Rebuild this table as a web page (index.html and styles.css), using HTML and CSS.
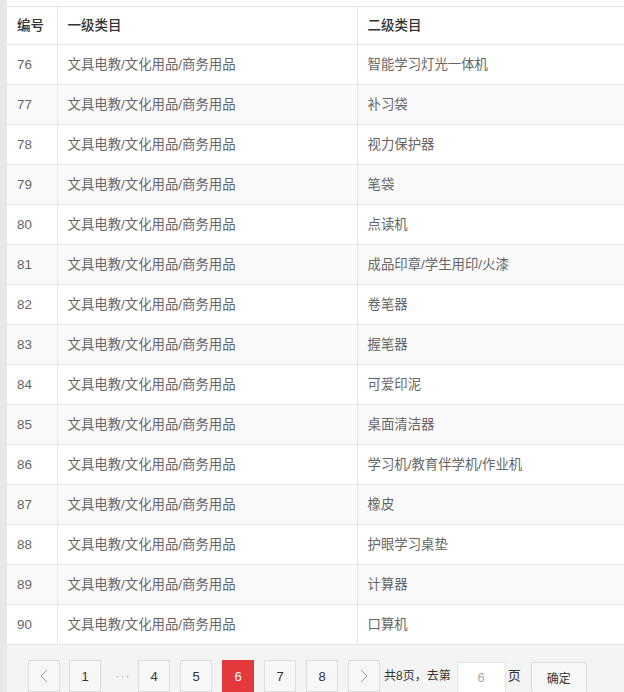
FILE: index.html
```html
<!DOCTYPE html>
<html lang="zh">
<head>
<meta charset="utf-8">
<link rel="stylesheet" href="styles.css">
</head>
<body>
<div class="page">
  <div class="strip"></div>
  <div class="main">
    <table class="grid">
      <colgroup><col class="c1"><col class="c2"><col class="c3"></colgroup>
      <thead>
        <tr><th>编号</th><th>一级类目</th><th>二级类目</th></tr>
      </thead>
      <tbody>
        <tr><td>76</td><td>文具电教/文化用品/商务用品</td><td>智能学习灯光一体机</td></tr>
        <tr><td>77</td><td>文具电教/文化用品/商务用品</td><td>补习袋</td></tr>
        <tr><td>78</td><td>文具电教/文化用品/商务用品</td><td>视力保护器</td></tr>
        <tr><td>79</td><td>文具电教/文化用品/商务用品</td><td>笔袋</td></tr>
        <tr><td>80</td><td>文具电教/文化用品/商务用品</td><td>点读机</td></tr>
        <tr><td>81</td><td>文具电教/文化用品/商务用品</td><td>成品印章/学生用印/火漆</td></tr>
        <tr><td>82</td><td>文具电教/文化用品/商务用品</td><td>卷笔器</td></tr>
        <tr><td>83</td><td>文具电教/文化用品/商务用品</td><td>握笔器</td></tr>
        <tr><td>84</td><td>文具电教/文化用品/商务用品</td><td>可爱印泥</td></tr>
        <tr><td>85</td><td>文具电教/文化用品/商务用品</td><td>桌面清洁器</td></tr>
        <tr><td>86</td><td>文具电教/文化用品/商务用品</td><td>学习机/教育伴学机/作业机</td></tr>
        <tr><td>87</td><td>文具电教/文化用品/商务用品</td><td>橡皮</td></tr>
        <tr><td>88</td><td>文具电教/文化用品/商务用品</td><td>护眼学习桌垫</td></tr>
        <tr><td>89</td><td>文具电教/文化用品/商务用品</td><td>计算器</td></tr>
        <tr><td>90</td><td>文具电教/文化用品/商务用品</td><td>口算机</td></tr>
      </tbody>
    </table>
    <div class="pager">
      <a class="pbtn arrow"><svg width="8" height="14" viewBox="0 0 8 14"><polyline points="7,1 1,7 7,13" fill="none" stroke="#999" stroke-width="1"/></svg></a>
      <a class="pbtn">1</a>
      <span class="dots">···</span>
      <a class="pbtn">4</a>
      <a class="pbtn">5</a>
      <a class="pbtn active">6</a>
      <a class="pbtn">7</a>
      <a class="pbtn">8</a>
      <a class="pbtn arrow"><svg width="8" height="14" viewBox="0 0 8 14"><polyline points="1,1 7,7 1,13" fill="none" stroke="#999" stroke-width="1"/></svg></a>
      <span class="skip">共8页，去第</span>
      <input class="goto" type="text" value="6">
      <span class="unit">页</span>
      <button class="ok">确定</button>
    </div>
  </div>
</div>
</body>
</html>
```

FILE: styles.css
```css
html, body {
  margin: 0;
  padding: 0;
  overflow: hidden;
  background: #fff;
}
body {
  font-family: "Liberation Sans", "Noto Sans CJK SC", sans-serif;
  font-size: 14px;
  color: #666;
}
.page {
  display: flex;
  width: 624px;
  height: 692px;
  overflow: hidden;
}
.strip {
  width: 7px;
  flex: none;
  background: #e8e8e8;
}
.main {
  flex: 1;
  min-width: 0;
  padding-top: 6px;
  display: flex;
  flex-direction: column;
}
.grid {
  border-collapse: collapse;
  table-layout: fixed;
  width: 820px;
}
.c1 { width: 50px; }
.c2 { width: 300px; }
.c3 { width: 470px; }
.grid th, .grid td {
  text-align: left;
  padding: 0 10px;
  border: 1px solid #e6e6e6;
  line-height: 20px;
  white-space: nowrap;
}
.grid tr > :first-child { border-left: none; }
.grid th {
  height: 37px;
  font-weight: 500;
  color: #333;
  font-size: 13.5px;
}
.grid td {
  height: 39px;
  font-size: 13.4px;
}
.grid tbody tr:nth-child(even) td { background: #fafafa; }
.pager {
  flex: 1;
  background: #f4f4f4;
  display: flex;
  align-items: flex-start;
  padding: 15px 0 0 21px;
  font-size: 13px;
  color: #333;
}
.pbtn {
  box-sizing: border-box;
  width: 32px;
  height: 32px;
  margin-right: 10px;
  border: 1px solid #dcdcdc;
  background: #f7f7f7;
  display: flex;
  align-items: center;
  justify-content: center;
  color: #333;
  font-size: 13px;
}
.pbtn.active {
  background: #e3393c;
  border-color: #e3393c;
  color: #fff;
}
.pbtn.arrow { margin-right: 9px; }
.dots {
  width: 28px;
  margin-left: -2px;
  margin-right: 1px;
  color: #aaa;
  font-size: 12px;
  letter-spacing: 1px;
  line-height: 32px;
  text-align: center;
}
.skip {
  line-height: 32px;
  font-size: 12px;
  margin-left: -5px;
}
.goto {
  box-sizing: border-box;
  width: 49px;
  height: 31px;
  margin: 2px 2px 0 6px;
  border: 1px solid #e6e6e6;
  background: #fff;
  color: #aaa;
  text-align: center;
  font-size: 13px;
  font-family: "Liberation Sans", sans-serif;
  padding: 0;
  outline: none;
}
.unit {
  line-height: 32px;
  font-size: 13px;
  margin-right: 10px;
}
.ok {
  box-sizing: border-box;
  width: 56px;
  height: 31px;
  margin-top: 2px;
  border: 1px solid #dcdcdc;
  border-radius: 2px;
  background: #f7f7f7;
  color: #333;
  font-family: "Noto Sans CJK SC", sans-serif;
  font-size: 12px;
  padding: 0;
}
```
